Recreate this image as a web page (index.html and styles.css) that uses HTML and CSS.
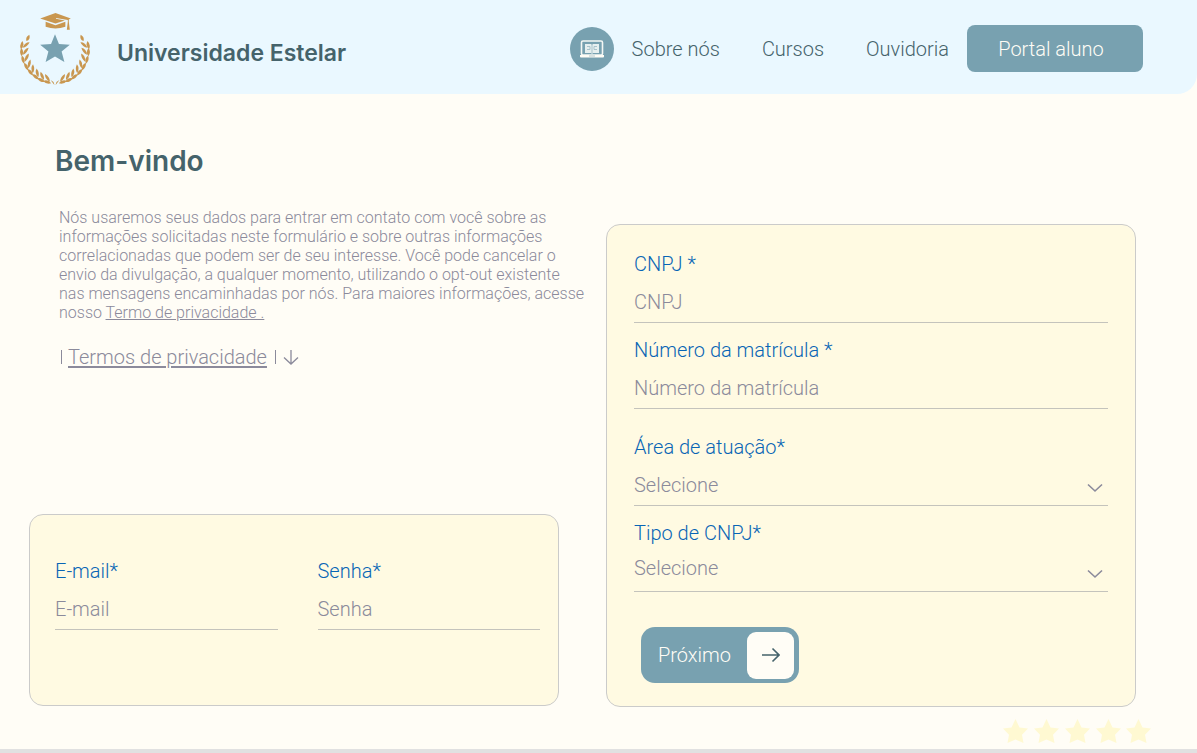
FILE: index.html
```html
<!DOCTYPE html>
<html lang="pt-BR">
<head>
<meta charset="utf-8">
<meta name="viewport" content="width=device-width, initial-scale=1">
<title>Universidade Estelar</title>
<link rel="stylesheet" href="styles.css">
</head>
<body>
<header class="header">
  <div class="brand">
    <svg class="brand-logo" viewBox="19 11 72 76" aria-hidden="true">
      <defs>
        <g id="leaves">
          <path d="M56 84.500q-4-4-8.500-1.200q4 3.500 8.500 1.200z"/>
          <path d="M54.500 83q-1-5-6-7q0 5 6 7z"/>
        </g>
        <g id="branch">
          <use href="#leaves" transform="rotate(8 55 50)"/>
          <use href="#leaves" transform="rotate(19 55 50)"/>
          <use href="#leaves" transform="rotate(30 55 50)"/>
          <use href="#leaves" transform="rotate(42 55 50)"/>
          <use href="#leaves" transform="rotate(54 55 50)"/>
          <use href="#leaves" transform="rotate(67 55 50)"/>
          <use href="#leaves" transform="rotate(80 55 50)"/>
          <use href="#leaves" transform="rotate(92 55 50)"/>
          <path d="M26 41.500q-1-4.500 3-6.500q1.500 5-3 6.500zM54.500 86l-1-3l-3-2l3 4z"/>
        </g>
      </defs>
      <g fill="#c99750">
        <use href="#branch"/>
        <use href="#branch" transform="matrix(-1 0 0 1 110 0)"/>
        <path d="M40 18.500L55.500 13L71 18.500L69 19.500V22L70 30H67L68 22V20L56 18V18.800L65 20.500L55.500 23.700z"/>
        <path d="M45.500 22L55.500 25.500L65.500 22V27Q55.500 30.500 45.500 27z"/>
      </g>
      <path fill="#78a1b0" d="M55 34.500L59 44.500L70 45.200L61.700 52L64.500 62.700L55 57L45.500 62.700L48.300 52L40 45.200L51 44.500z"/>
    </svg>
    <span class="brand-name">Universidade Estelar</span>
  </div>
  <nav class="nav">
    <a class="nav-about" href="#">
      <span class="nav-badge">
        <svg width="26" height="20" viewBox="0 0 26 20" aria-hidden="true">
          <rect x="2.500" y="2" width="21" height="14" rx="1.500" fill="#78a1b0" stroke="#f4f7f4" stroke-width="1.600"/>
          <path d="M6 5h6l1 1l1-1h6v9h-6l-1 1l-1-1H6z" fill="#e6efef"/>
          <path d="M13 6v8M8 7.500h3v3H8M18 7.500h-3v3h3" fill="none" stroke="#a9c3cb"/>
          <path d="M1 16h24v1.500q0 1-1 1H2q-1 0-1-1z" fill="#fffdf6"/>
          <path d="M10 17h6" stroke="#b5c9ce"/>
        </svg>
      </span>
      Sobre nós
    </a>
    <a href="#">Cursos</a>
    <a href="#">Ouvidoria</a>
    <button class="portal" type="button">Portal aluno</button>
  </nav>
</header>

<main class="main">
  <div class="column">
    <section class="intro">
      <h1 class="title">Bem-vindo</h1>
      <p class="notice">Nós usaremos seus dados para entrar em contato com você sobre as<br>informações solicitadas neste formulário e sobre outras informações<br>correlacionadas que podem ser de seu interesse. Você pode cancelar o<br>envio da divulgação, a qualquer momento, utilizando o opt-out existente<br>nas mensagens encaminhadas por nós. Para maiores informações, acesse<br>nosso <a href="#">Termo de privacidade .</a></p>
      <p class="terms"><span class="bar"></span><a href="#">Termos de privacidade</a><span class="bar bar-end"></span>
        <svg width="16" height="16" viewBox="0 0 16 16" aria-hidden="true"><path d="M8 1v14M1 8.500l7 6.500l7-6.500" fill="none" stroke="#8b8a9b" stroke-width="1.300"/></svg>
      </p>
    </section>
    <form class="card login">
      <div class="field">
        <label for="email">E-mail*</label>
        <input id="email" type="email" placeholder="E-mail">
      </div>
      <div class="field">
        <label for="senha">Senha*</label>
        <input id="senha" type="password" placeholder="Senha">
      </div>
    </form>
  </div>

  <form class="card register">
    <div class="group">
      <div class="field">
        <label for="cnpj">CNPJ *</label>
        <input id="cnpj" type="text" placeholder="CNPJ">
      </div>
      <div class="field">
        <label for="matricula">Número da matrícula *</label>
        <input id="matricula" type="text" placeholder="Número da matrícula">
      </div>
    </div>
    <div class="group">
      <div class="field">
        <label for="area">Área de atuação*</label>
        <div class="select">
          <select id="area"><option>Selecione</option></select>
          <svg class="chevron" width="16" height="10" viewBox="0 0 16 10" aria-hidden="true"><path d="M1 1.500l7 6.500l7-6.500" fill="none" stroke="#8b8a9b" stroke-width="1.600"/></svg>
        </div>
      </div>
      <div class="field">
        <label for="tipo">Tipo de CNPJ*</label>
        <div class="select">
          <select id="tipo" class="raised"><option>Selecione</option></select>
          <svg class="chevron" width="16" height="10" viewBox="0 0 16 10" aria-hidden="true"><path d="M1 1.500l7 6.500l7-6.500" fill="none" stroke="#8b8a9b" stroke-width="1.600"/></svg>
        </div>
      </div>
    </div>
    <button class="next" type="button">
      <span>Próximo</span>
      <span class="next-icon"><svg width="18" height="16" viewBox="0 0 18 16" aria-hidden="true"><path d="M0 8h16.500M10.500 1.500l6.500 6.500l-6.500 6.500" fill="none" stroke="#45636b" stroke-width="1.600"/></svg></span>
    </button>
  </form>
</main>

<footer class="footer">
  <svg width="149" height="26" viewBox="0 0 149 26" fill="#fff9d2" role="img" aria-label="Cinco estrelas">
    <defs><path id="star" d="M12.500 1L16.500 9.500L25 10.500L19 16.800L20.500 25L12.500 21.500L4.500 25L6 16.800L0 10.500L8.500 9.500z"/></defs>
    <use href="#star"/><use href="#star" x="31"/><use href="#star" x="62"/><use href="#star" x="93"/><use href="#star" x="123"/>
  </svg>
</footer>
</body>
</html>
```

FILE: styles.css
```css
* {
  box-sizing: border-box;
}

body {
  margin: 0;
  background: #fffdf6;
  color: #8b8a9b;
  font-family: Roboto, "Liberation Sans", sans-serif;
  font-size: 20px;
  font-weight: 300;
  line-height: 24px;
}

a {
  color: inherit;
}

button,
input,
select {
  font: inherit;
}

.header {
  display: flex;
  align-items: center;
  justify-content: space-between;
  padding: 11px 54px 8px 19px;
  background: #eaf8ff;
  border-bottom-right-radius: 20px;
  color: #45636b;
}

.brand {
  display: flex;
  align-items: center;
  gap: 26px;
}

.brand-logo {
  width: 72px;
  height: 75px;
}

.brand-name {
  margin-top: 8px;
  font-family: Inter, "Liberation Sans", sans-serif;
  font-size: 23px;
  font-weight: 600;
}

.nav {
  display: flex;
  align-items: center;
  gap: 42px;
}

.nav a {
  text-decoration: none;
}

.nav-about {
  display: flex;
  align-items: center;
  gap: 18px;
}

.nav-badge {
  display: grid;
  place-items: center;
  width: 44px;
  height: 44px;
  border-radius: 50%;
  background: #78a1b0;
}

.portal {
  width: 176px;
  height: 47px;
  margin-left: -24px;
  padding: 0 8px 0 0;
  border: 0;
  border-radius: 8px;
  background: #78a1b0;
  color: #fffdf6;
}

.main {
  display: grid;
  grid-template-columns: minmax(0, 1fr) minmax(0, 1fr);
  align-items: end;
  gap: 47px;
  padding: 48px 61px 0 29px;
}

.column {
  display: flex;
  flex-direction: column;
  justify-content: space-between;
  align-self: stretch;
  gap: 120px;
}

.title {
  margin: 0 0 28px 26px;
  color: #45636b;
  font-family: Inter, "Liberation Sans", sans-serif;
  font-size: 28px;
  font-weight: 600;
  line-height: 38px;
}

.notice {
  margin: 0 0 0 30px;
  font-size: 16px;
  line-height: 19px;
  white-space: nowrap;
}

.terms {
  display: flex;
  align-items: center;
  margin: 23px 0 0 32px;
}

.terms a {
  margin: 0 8px 0 6px;
  text-underline-offset: 2px;
}

.bar {
  width: 1px;
  height: 14px;
  background: #8b8a9b;
}

.bar-end {
  margin-right: 7px;
}

.card {
  border: 1px solid #cbcbca;
  border-radius: 14px;
  background: #fffae2;
}

.login {
  display: grid;
  grid-template-columns: minmax(0, 1fr) minmax(0, 1fr);
  gap: 40px;
  margin-bottom: 1px;
  padding: 44px 18px 75px 25px;
}

.register {
  margin-top: 82px;
  padding: 27px 27px 23px;
}

.field {
  display: grid;
  gap: 7px;
}

.field label {
  color: #0865b5;
}

.field input,
.field select {
  width: 100%;
  height: 40px;
  padding: 0 0 2px;
  border: 0;
  border-bottom: 1px solid #c4c3bc;
  border-radius: 0;
  background: transparent;
  color: #8b8a9b;
  appearance: none;
}

.field input::placeholder {
  color: #8b8a9b;
  opacity: 1;
}

.field .raised {
  padding-bottom: 8px;
}

.group {
  display: grid;
  gap: 15px;
}

.group + .group {
  margin-top: 26px;
}

.select {
  position: relative;
}

.chevron {
  position: absolute;
  right: 5px;
  bottom: 13px;
  pointer-events: none;
}

.next {
  display: flex;
  align-items: center;
  gap: 16px;
  height: 56px;
  margin: 35px 0 0 7px;
  padding: 0 5px 0 17px;
  border: 0;
  border-radius: 14px;
  background: #78a1b0;
  color: #fffdf6;
}

.next-icon {
  display: grid;
  place-items: center;
  width: 47px;
  height: 47px;
  border-radius: 9px;
  background: #fffdf6;
}

.footer {
  display: flex;
  justify-content: flex-end;
  padding: 11px 45px 5px 0;
  border-bottom: 4px solid #e1e1e1;
}
```
